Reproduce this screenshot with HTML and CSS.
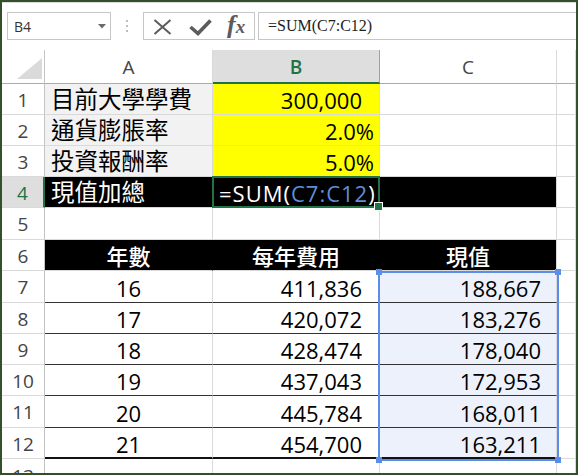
FILE: index.html
```html
<!DOCTYPE html>
<html>
<head>
<meta charset="utf-8">
<link rel="stylesheet" href="styles.css">
</head>
<body>
<div class="frame">
  <div class="fbar">
    <div class="namebox">
      <span class="nb-text">B4</span>
      <svg class="nb-arrow" width="8" height="5" viewBox="0 0 8 5"><path d="M0 0H8L4 4.5Z" fill="#6a6a6a"/></svg>
    </div>
    <svg class="dots" width="6" height="28" viewBox="0 0 6 28"><circle cx="3" cy="9" r="1" fill="#a8a8a8"/><circle cx="3" cy="14" r="1" fill="#a8a8a8"/><circle cx="3" cy="19" r="1" fill="#a8a8a8"/></svg>
    <div class="btnbox">
      <svg class="ic-x" width="19" height="16" viewBox="0 0 19 16"><path d="M1.5 1L17.5 15M17.5 1L1.5 15" stroke="#5c5c5c" stroke-width="2" fill="none"/></svg>
      <svg class="ic-check" width="23" height="18" viewBox="0 0 23 18"><path d="M1.5 9L9 15.5L21.5 2.5" stroke="#5c5c5c" stroke-width="3.6" fill="none"/></svg>
      <span class="ic-fx"><span class="fx-f">f</span><span class="fx-x">x</span></span>
    </div>
    <div class="formula">=SUM(C7:C12)</div>
  </div>

  <div class="sheet">
    <div class="c corner"><span class="tri"></span></div>
    <div class="c ch">A</div>
    <div class="c ch chsel">B</div>
    <div class="c ch">C</div>
    <div class="c ch"></div>

    <div class="c rh">1</div>
    <div class="c lab">目前大學學費</div>
    <div class="c yel num pad">300,000</div>
    <div class="c"></div>
    <div class="c"></div>

    <div class="c rh">2</div>
    <div class="c lab">通貨膨脹率</div>
    <div class="c yel num">2.0%</div>
    <div class="c"></div>
    <div class="c"></div>

    <div class="c rh">3</div>
    <div class="c lab">投資報酬率</div>
    <div class="c yel num">5.0%</div>
    <div class="c"></div>
    <div class="c"></div>

    <div class="c rh rhsel">4</div>
    <div class="c blk lab2">現值加總</div>
    <div class="c blk active"><span class="fml">=SUM(<span class="ref">C7:C12</span>)</span></div>
    <div class="c blk blkend"></div>
    <div class="c"></div>

    <div class="c rh">5</div>
    <div class="c"></div>
    <div class="c"></div>
    <div class="c"></div>
    <div class="c"></div>

    <div class="c rh">6</div>
    <div class="c blk hdr">年數</div>
    <div class="c blk hdr">每年費用</div>
    <div class="c blk hdr blkend">現值</div>
    <div class="c"></div>

    <div class="c rh">7</div>
    <div class="c d ctr">16</div>
    <div class="c d num pad">411,836</div>
    <div class="c d sv num pad2">188,667</div>
    <div class="c"></div>

    <div class="c rh">8</div>
    <div class="c d ctr">17</div>
    <div class="c d num pad">420,072</div>
    <div class="c d sv num pad2">183,276</div>
    <div class="c"></div>

    <div class="c rh">9</div>
    <div class="c d ctr">18</div>
    <div class="c d num pad">428,474</div>
    <div class="c d sv num pad2">178,040</div>
    <div class="c"></div>

    <div class="c rh">10</div>
    <div class="c d ctr">19</div>
    <div class="c d num pad">437,043</div>
    <div class="c d sv num pad2">172,953</div>
    <div class="c"></div>

    <div class="c rh">11</div>
    <div class="c d ctr">20</div>
    <div class="c d num pad">445,784</div>
    <div class="c d sv num pad2">168,011</div>
    <div class="c"></div>

    <div class="c rh">12</div>
    <div class="c d last ctr">21</div>
    <div class="c d last num pad">454,700</div>
    <div class="c d last sv num pad2">163,211</div>
    <div class="c"></div>

    <div class="c rh cut">13</div>
    <div class="c"></div>
    <div class="c"></div>
    <div class="c"></div>
    <div class="c"></div>

    <div class="selection">
      <span class="hd tl"></span><span class="hd tr"></span><span class="hd bl"></span><span class="hd br"></span>
    </div>
  </div>
</div>
</body>
</html>
```

FILE: styles.css
```css
* { box-sizing: border-box; }
html, body { margin: 0; padding: 0; background: #fff; }
body { font-family: "Open Sans", "Noto Sans CJK TC", sans-serif; }

.frame {
  width: 578px;
  height: 475px;
  border: 2px solid #34502a;
  overflow: hidden;
  display: flex;
  flex-direction: column;
  background: #fff;
}

/* formula bar */
.fbar {
  height: 48px;
  flex: none;
  display: flex;
  align-items: flex-start;
  padding-top: 9px;
  border-top: 1px solid #dcdcdc;
}
.namebox {
  margin-left: 5px;
  width: 104px;
  height: 28px;
  border: 1px solid #c6c6c6;
  display: flex;
  align-items: center;
  justify-content: space-between;
  padding: 0 4px 0 6px;
  font-size: 14px;
  color: #333;
}
.nb-arrow { margin-top: 1px; }
.dots { margin-left: 13px; flex: none; }
.btnbox {
  margin-left: 13px;
  width: 112px;
  height: 28px;
  border: 1px solid #c6c6c6;
  display: flex;
  align-items: center;
}
.ic-x { margin-left: 9px; margin-top: 2px; flex: none; }
.ic-check { margin-left: 17px; margin-top: 1px; flex: none; }
.ic-fx {
  margin-left: 15px;
  font-family: "Liberation Serif", serif;
  font-style: italic;
  font-weight: bold;
  color: #5c5c5c;
  line-height: 1;
  display: flex;
  align-items: baseline;
  margin-top: -2px;
}
.fx-f { font-size: 26px; }
.fx-x { font-size: 19px; margin-left: 0; }
.formula {
  margin-left: 3px;
  flex: 1;
  height: 28px;
  border: 1px solid #c6c6c6;
  border-right: none;
  font-family: "Liberation Serif", serif;
  font-size: 16px;
  color: #222;
  padding-left: 9px;
  display: flex;
  align-items: center;
}

/* sheet grid */
.sheet {
  flex: 1;
  position: relative;
  display: grid;
  grid-template-columns: 43px 168px 167px 177px 1fr;
  grid-template-rows: 34px 31px 31px 31px 31px 32px 31px 32px 31px 31px 31px 32px 31px 1fr;
  font-size: 22px;
  color: #000;
}
.c {
  border-right: 1px solid #d9d9d9;
  border-bottom: 1px solid #d9d9d9;
  display: flex;
  align-items: center;
  padding-top: 2px;
  white-space: nowrap;
  line-height: 1;
  min-width: 0;
}
.corner {
  border-right-color: #c4c4c4;
  border-bottom-color: #ababab;
  justify-content: flex-end;
  align-items: flex-end;
  padding: 0 2px 4px 0;
}
.tri {
  width: 25px;
  height: 21px;
  background: #dadada;
  clip-path: polygon(100% 0, 100% 100%, 0 100%);
}
.ch {
  justify-content: center;
  font-size: 19px;
  color: #444;
  border-bottom-color: #ababab;
}
.chsel {
  background: #dedede;
  color: #217346;
  font-weight: 600;
  border-bottom: 2px solid #217346;
  border-right-color: #a0a0a0;
}
.rh {
  justify-content: center;
  font-size: 19px;
  color: #444;
  border-right-color: #c4c4c4;
}
.rhsel {
  background: #dedede;
  color: #217346;
  border-right: 2px solid #217346;
}
.cut {
  align-items: flex-start;
  padding-top: 8px;
  overflow: hidden;
}

.lab {
  background: #f2f2f2;
  font-size: 23.5px;
  padding-left: 6px;
}
.lab2 { font-size: 23.5px; padding-left: 6px; }
.yel { background: #ffff00; }
.num { justify-content: flex-end; padding-right: 5px; }
.num.pad { padding-right: 17px; }
.num.pad2 { padding-right: 15px; }
.ctr { justify-content: center; }

.blk {
  background: #000;
  color: #fff;
  border-right-color: #000;
}
.blk.blkend { border-right-color: #d9d9d9; }
.hdr { justify-content: center; font-size: 22px; font-weight: 500; }

.active { position: relative; padding-left: 6px; }
.active::before {
  content: "";
  position: absolute;
  left: -1px; top: -1px; right: -1px; bottom: -1px;
  border: 2px solid #217346;
}
.active::after {
  content: "";
  position: absolute;
  right: -4px; bottom: -4px;
  width: 7px; height: 7px;
  background: #217346;
  border: 1px solid #fff;
}
.fml { letter-spacing: 1px; }
.ref { color: #5b8fd9; }

.d { border-bottom-color: #333; }
.d.last { border-bottom: 2px solid #111; }
.sv { background: #edf1fb; }

.selection {
  position: absolute;
  left: 376px;
  top: 221px;
  width: 181px;
  height: 190px;
  border: 2px solid #5b8eea;
  pointer-events: none;
}
.hd {
  position: absolute;
  width: 6px;
  height: 6px;
  background: #5b8eea;
}
.tl { left: -4px; top: -4px; }
.tr { right: -4px; top: -4px; }
.bl { left: -4px; bottom: -4px; }
.br { right: -4px; bottom: -4px; }
```
